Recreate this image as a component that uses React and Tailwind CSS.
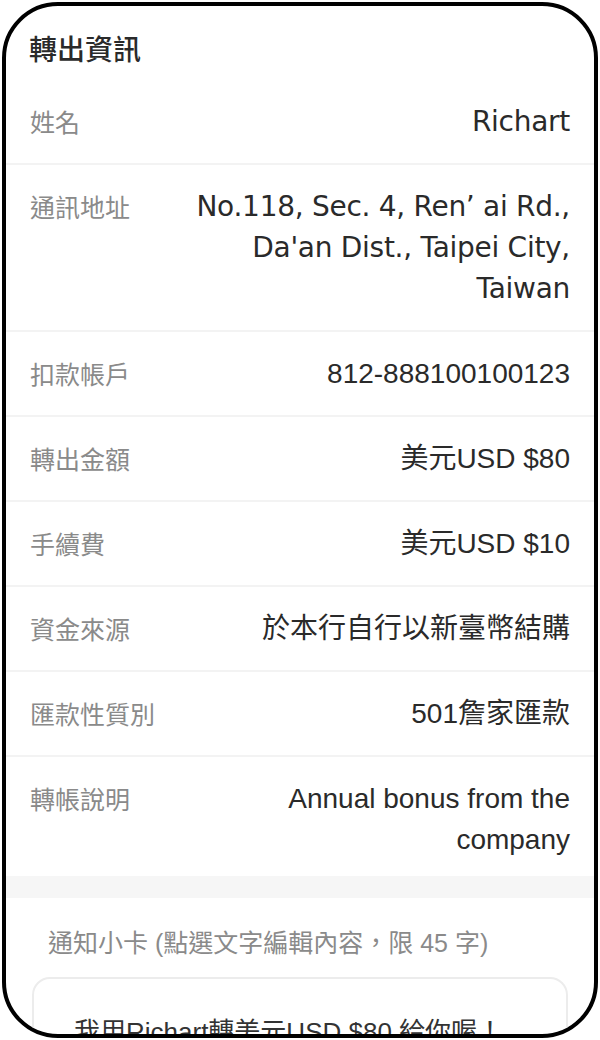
const rows = [
  { label: '姓名', value: ['Richart'], geo: true },
  {
    label: '通訊地址',
    value: ['No.118, Sec. 4, Ren’ ai Rd.,', "Da'an Dist., Taipei City,", 'Taiwan'],
    geo: true,
  },
  { label: '扣款帳戶', value: ['812-888100100123'] },
  { label: '轉出金額', value: ['美元USD $80'] },
  { label: '手續費', value: ['美元USD $10'] },
  { label: '資金來源', value: ['於本行自行以新臺幣結購'] },
  { label: '匯款性質別', value: ['501詹家匯款'] },
  { label: '轉帳說明', value: ['Annual bonus from the', 'company'] },
]

function InfoRow({ label, value, geo, last }) {
  return (
    <div
      className={
        'flex items-start justify-between pl-[24px] pr-[24px] pt-[21px] ' +
        (last ? 'pb-[16px]' : 'pb-[21px] border-b-[2px] border-[#f3f3f3]')
      }
    >
      <div className="shrink-0 text-[25px] leading-[41px] text-[#8a8a8a] font-['Noto_Sans_CJK_TC',sans-serif]">
        {label}
      </div>
      <div
        className={
          'text-right text-[28px] leading-[41px] text-[#2a2a2a] ' +
          (geo
            ? "font-['DejaVu_Sans','Noto_Sans_CJK_TC',sans-serif] tracking-[-0.01em]"
            : "font-['Liberation_Sans','Noto_Sans_CJK_TC',sans-serif]")
        }
      >
        {value.map((line) => (
          <div key={line} className="whitespace-nowrap">
            {line}
          </div>
        ))}
      </div>
    </div>
  )
}

export default function App() {
  return (
    <div className="w-[600px] h-[1040px] bg-white p-[2px]">
      <div className="h-[1036px] rounded-[56px] border-4 border-black overflow-hidden bg-white">
        {/* 標題 */}
        <div className="h-[74px] pt-[28px] pl-[23px] text-[28px] leading-[28px] font-medium text-[#2a2a2a] font-['Noto_Sans_CJK_TC',sans-serif]">
          轉出資訊
        </div>

        {/* 明細 */}
        {rows.map((r, i) => (
          <InfoRow key={r.label} {...r} last={i === rows.length - 1} />
        ))}

        <div className="h-[22px] bg-[#f6f6f6]" />

        {/* 通知小卡 */}
        <div className="pt-[32px] pl-[42px] text-[25px] leading-[26px] text-[#8a8a8a] font-['Liberation_Sans','Noto_Sans_CJK_TC',sans-serif]">
          通知小卡 (點選文字編輯內容，限 45 字)
        </div>
        <div className="mt-[21px] mx-[26px] rounded-[18px] border-2 border-[#ececec] pt-[38px] pl-[40px] pb-[30px] text-[26px] leading-[30px] text-[#333] font-['Liberation_Sans','Noto_Sans_CJK_TC',sans-serif]">
          我用Richart轉美元USD $80 給你喔！
        </div>
      </div>
    </div>
  )
}
